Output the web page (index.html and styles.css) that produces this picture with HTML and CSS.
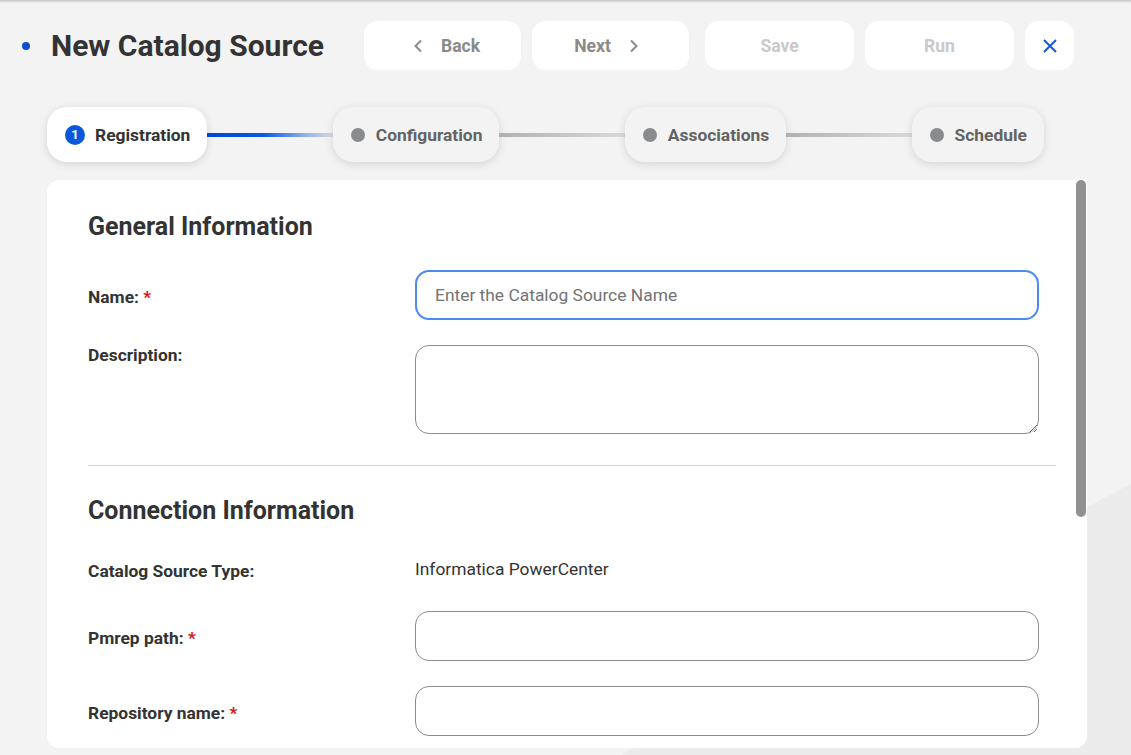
FILE: index.html
```html
<!DOCTYPE html>
<html lang="en">
<head>
    <meta charset="UTF-8">
    <meta name="viewport" content="width=device-width, initial-scale=1.0">
    <title>New Catalog Source</title>
    <link rel="stylesheet" href="styles.css">
</head>
<body>
    <div class="topbar"></div>

    <!-- Header with title and wizard actions -->
    <div class="header">
        <div class="title">
            <span class="title-dot"></span>
            <h1>New Catalog Source</h1>
        </div>
        <div class="actions">
            <button class="btn btn-nav btn-back">
                <svg width="10" height="14" viewBox="0 0 10 14"><polyline points="8,1.5 2.5,7 8,12.5" fill="none" stroke="#8a8a8a" stroke-width="2"/></svg>
                Back
            </button>
            <button class="btn btn-nav btn-next">
                Next
                <svg width="10" height="14" viewBox="0 0 10 14"><polyline points="2,1.5 7.5,7 2,12.5" fill="none" stroke="#8a8a8a" stroke-width="2"/></svg>
            </button>
            <button class="btn btn-action btn-save">Save</button>
            <button class="btn btn-action">Run</button>
            <button class="btn btn-close" aria-label="Close">
                <svg width="14" height="14" viewBox="0 0 14 14"><path d="M1 1 L13 13 M13 1 L1 13" stroke="#1558d6" stroke-width="2"/></svg>
            </button>
        </div>
    </div>

    <!-- Stepper -->
    <div class="stepper">
        <div class="step active"><span class="step-num">1</span>Registration</div>
        <div class="connector done"></div>
        <div class="step"><span class="step-dot"></span>Configuration</div>
        <div class="connector"></div>
        <div class="step"><span class="step-dot"></span>Associations</div>
        <div class="connector"></div>
        <div class="step"><span class="step-dot"></span>Schedule</div>
    </div>

    <!-- Form card -->
    <div class="card">
        <div class="scroll-thumb"></div>

        <h2>General Information</h2>
        <div class="row">
            <label>Name: <span class="req">*</span></label>
            <input type="text" class="field focused" placeholder="Enter the Catalog Source Name">
        </div>
        <div class="row row-top">
            <label>Description:</label>
            <textarea class="field area"></textarea>
        </div>

        <hr class="divider">

        <h2>Connection Information</h2>
        <div class="row row-static">
            <label>Catalog Source Type:</label>
            <div class="value">Informatica PowerCenter</div>
        </div>
        <div class="row">
            <label>Pmrep path: <span class="req">*</span></label>
            <input type="text" class="field">
        </div>
        <div class="row">
            <label>Repository name: <span class="req">*</span></label>
            <input type="text" class="field">
        </div>
    </div>
</body>
</html>
```

FILE: styles.css
```css
body {
    font-family: Roboto, "Noto Sans", sans-serif;
    margin: 0;
    padding: 0;
    height: 755px;
    overflow: hidden;
    background-color: #f3f3f3;
    background-image:
        linear-gradient(152deg, transparent 80%, rgba(0, 0, 0, 0.03) 80%);
    color: #333;
}
.topbar {
    height: 3px;
    background: linear-gradient(#c4c4c4, #f3f3f3);
}

/* header */
.header {
    display: flex;
    align-items: center;
    padding: 18px 0 0 22px;
}
.title {
    display: flex;
    align-items: center;
    width: 342px;
}
.title-dot {
    width: 8px;
    height: 8px;
    border-radius: 50%;
    background: #0b4fcf;
    margin-right: 21px;
}
h1 {
    margin: 0;
    font-size: 30px;
    font-weight: 700;
    color: #333;
}
.actions {
    display: flex;
    gap: 11px;
}
.btn {
    height: 49px;
    border: none;
    border-radius: 14px;
    background: #fff;
    font-family: inherit;
    font-size: 17.5px;
    font-weight: 700;
    display: flex;
    align-items: center;
    justify-content: center;
    gap: 18px;
    padding: 0;
}
.btn-nav {
    width: 157px;
    color: #8a8a8a;
}
.btn-back {
    padding-left: 8px;
}
.btn-next {
    padding-right: 8px;
}
.btn-action {
    width: 149px;
    color: #c9c9c9;
}
.btn-save {
    margin-left: 5px;
}
.btn-close {
    width: 49px;
}

/* stepper */
.stepper {
    display: flex;
    align-items: center;
    width: 997px;
    margin: 37px 0 0 47px;
}
.step {
    height: 55px;
    box-sizing: border-box;
    display: flex;
    align-items: center;
    padding: 0 17px 0 18px;
    border-radius: 20px;
    background: #f3f3f3;
    box-shadow: 0 2px 8px rgba(0, 0, 0, 0.13);
    font-size: 17.4px;
    font-weight: 700;
    color: #636363;
    white-space: nowrap;
}
.step.active {
    background: #fff;
    color: #333;
}
.step-num {
    width: 20px;
    height: 20px;
    border-radius: 50%;
    background: #0b57dc;
    color: #fff;
    font-size: 13px;
    font-weight: 700;
    display: flex;
    align-items: center;
    justify-content: center;
    margin-right: 10px;
}
.step-dot {
    width: 14px;
    height: 14px;
    border-radius: 50%;
    background: #8a8b8d;
    margin-right: 11px;
}
.connector {
    flex: 1;
    height: 4px;
    background: linear-gradient(90deg, #aeb1b4, #d9d9d9);
}
.connector.done {
    background: linear-gradient(90deg, #0046d2 0%, #0a5ae0 45%, #9bb4e6 80%, #d8dbe2 100%);
}

/* form card */
.card {
    position: relative;
    margin: 18px 0 0 47px;
    width: 1040px;
    height: 568px;
    box-sizing: border-box;
    background: #fff;
    border-radius: 12px 0 12px 12px;
    overflow: hidden;
    padding: 32px 31px 0 41px;
}
/* drawn scrollbar thumb over the card's right edge */
.scroll-thumb {
    position: absolute;
    top: 0;
    right: 1px;
    width: 10px;
    height: 337px;
    border-radius: 5px;
    background: #919191;
}
h2 {
    margin: 0 0 28px;
    font-size: 25px;
    line-height: 30px;
    font-weight: 700;
    color: #333;
}
.row {
    display: grid;
    grid-template-columns: 327px 624px;
    align-items: center;
    margin-bottom: 25px;
}
.row label {
    font-size: 17.4px;
    font-weight: 700;
    color: #333;
    padding-top: 3px;
}
.row-top {
    align-items: start;
    margin-bottom: 0;
}
.row-top label {
    padding-top: 0;
}
.row-static {
    height: 30px;
    margin-bottom: 27px;
}
.req {
    color: #e01010;
}
.value {
    font-size: 17.4px;
    color: #333;
}
.field {
    height: 50px;
    box-sizing: border-box;
    border: 1px solid #8c8c8c;
    border-radius: 14px;
    padding: 0 18px;
    font-family: inherit;
    font-size: 17.4px;
    color: #333;
    outline: none;
    background: #fff;
}
.field::placeholder {
    color: #737373;
}
.field.focused {
    border: 2px solid #4a8af4;
}
.area {
    height: 89px;
    resize: vertical;
    padding: 10px 18px;
}
.divider {
    border: none;
    border-top: 1px solid #d4d4d4;
    margin: 31px 0 30px;
}
```
